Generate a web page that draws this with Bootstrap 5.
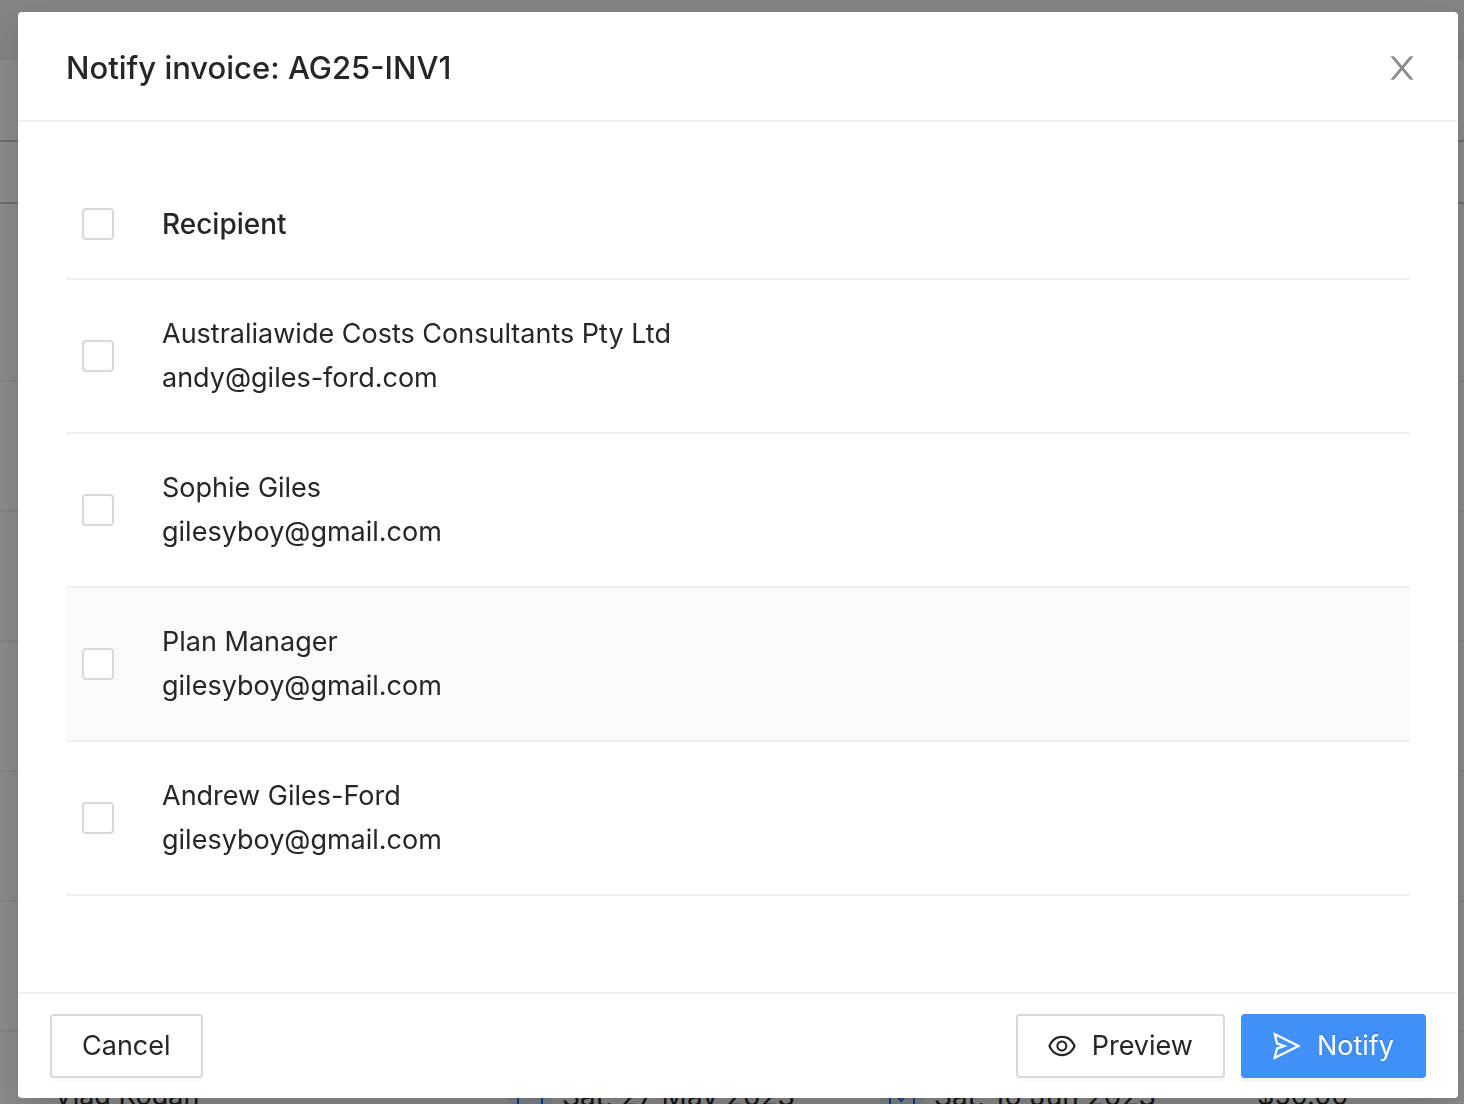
<!DOCTYPE html>
<html lang="en">
<head>
<meta charset="utf-8">
<meta name="viewport" content="width=device-width, initial-scale=1">
<title>Notify invoice: AG25-INV1</title>
<link href="https://cdn.jsdelivr.net/npm/bootstrap@5.3.0/dist/css/bootstrap.min.css" rel="stylesheet">
<style>
  body { font: 27px/44px Inter, "Liberation Sans", sans-serif; color: #262626; background: #fff; }
  .page-under { height: 100vh; overflow: hidden; }
  .page-top { height: 60px; background: #f0f2f5; }
  .page-tabs { height: 82px; border-bottom: 2px solid #c9c9c9; }
  .invoice-list { table-layout: fixed; width: 100%; border-collapse: separate; border-spacing: 0; }
  .invoice-list th { height: 62px; border-bottom: 2px solid #c9c9c9; }
  .invoice-list td { height: 130px; padding: 0; border-bottom: 2px solid #f0f0f0; white-space: nowrap; }
  .invoice-list .tall-row td { height: 178px; }
  .invoice-list td:first-child { padding-left: 54px; }
  .date-cell { gap: 10px; font-size: 28px; }
  .date-icon { width: 44px; height: 44px; background: #e6f0ff; color: #1a6fff; }
  .modal-backdrop { --bs-backdrop-opacity: .45; }
  .notify-dialog { max-width: none; margin: 12px 6px 6px 18px; }
  .modal-content { color: inherit; border: 0; border-radius: 4px; box-shadow: 0 12px 32px rgba(0,0,0,.12), 0 18px 56px 16px rgba(0,0,0,.05); }
  .modal-header { padding: 34px 40px 30px 48px; border-bottom: 2px solid #f0f0f0; border-radius: 0; }
  .modal-title { font-size: 31px; line-height: 44px; font-weight: 500; }
  .close-btn { width: 32px; height: 32px; color: #8c8c8c; }
  .modal-body { padding: 48px; }
  .recipients { --bs-table-color: #262626; --bs-table-bg: transparent; margin-bottom: 48px; table-layout: fixed; }
  .recipients > :not(caption) > * > * { padding: 32px 16px; border-bottom: 2px solid #f0f0f0; vertical-align: middle; }
  .recipients th { font-size: 28px; font-weight: 500; }
  .recipients .pick-col { width: 80px; }
  .recipients .row-hover > td { background: #fafafa; }
  .recipients .form-check-input { display: block; float: none; width: 32px; height: 32px; margin: 0; border: 2px solid #d9d9d9; border-radius: 4px; background-color: #fff; }
  .modal-footer { padding: 20px 32px; gap: 16px; border-top: 2px solid #f0f0f0; }
  .modal-footer > * { margin: 0; }
  .action-btn { --bs-btn-font-size: 27px; --bs-btn-line-height: 44px; --bs-btn-padding-x: 30px; --bs-btn-padding-y: 8px; --bs-btn-border-width: 2px; --bs-btn-border-radius: 4px; --bs-btn-color: #262626; --bs-btn-bg: #fff; --bs-btn-border-color: #d9d9d9; box-shadow: 0 4px 0 rgba(0,0,0,.02); }
  .action-main { --bs-btn-color: #fff; --bs-btn-bg: #4090f7; --bs-btn-border-color: #4090f7; text-shadow: 0 -2px 0 rgba(0,0,0,.12); box-shadow: 0 4px 0 rgba(0,0,0,.045); }
</style>
<script src="https://cdn.jsdelivr.net/npm/bootstrap@5.3.0/dist/js/bootstrap.bundle.min.js"></script>
</head>
<body>
<div class="page-under">
  <div class="page-top"></div>
  <div class="page-tabs"></div>
  <table class="invoice-list">
    <colgroup><col style="width:508px"><col style="width:372px"><col style="width:377px"><col></colgroup>
    <thead><tr><th></th><th></th><th></th><th></th></tr></thead>
    <tbody>
      <tr class="tall-row"><td></td><td></td><td></td><td></td></tr>
      <tr><td></td><td></td><td></td><td></td></tr>
      <tr><td></td><td></td><td></td><td></td></tr>
      <tr><td></td><td></td><td></td><td></td></tr>
      <tr><td></td><td></td><td></td><td></td></tr>
      <tr><td></td><td></td><td></td><td></td></tr>
      <tr>
        <td>Vlad Kogan</td>
        <td><div class="date-cell d-flex align-items-center"><span class="date-icon d-flex align-items-center justify-content-center"><svg width="28" height="28" viewBox="0 0 28 28" fill="none" stroke="currentColor" stroke-width="2"><path d="M2 5h24v21H2zM8 1v6M20 1v6"/></svg></span>Sat, 27 May 2023</div></td>
        <td><div class="date-cell d-flex align-items-center"><span class="date-icon d-flex align-items-center justify-content-center"><svg width="28" height="28" viewBox="0 0 28 28" fill="none" stroke="currentColor" stroke-width="2"><path d="M2 5h24v21H2zM8 1v6M20 1v6M9 14l4 5 7-8"/></svg></span>Sat, 10 Jun 2023</div></td>
        <td>$50.00</td>
      </tr>
    </tbody>
  </table>
</div>
<div class="modal-backdrop show"></div>
<div class="modal d-block" tabindex="-1" role="dialog" aria-modal="true" aria-labelledby="notifyTitle">
  <div class="modal-dialog notify-dialog">
    <div class="modal-content">
      <div class="modal-header">
        <h1 class="modal-title" id="notifyTitle">Notify invoice: AG25-INV1</h1>
        <button type="button" class="close-btn btn p-0 border-0 d-flex" aria-label="Close"><svg width="32" height="32" viewBox="64 64 896 896" fill="currentColor" aria-hidden="true"><path d="M563.8 512l262.5-312.9c4.4-5.2.7-13.1-6.1-13.1h-79.8c-4.7 0-9.2 2.1-12.3 5.7L511.6 449.8 295.1 191.7c-3-3.6-7.5-5.7-12.3-5.7H203c-6.8 0-10.5 7.9-6.1 13.1L459.4 512 196.9 824.9A7.95 7.95 0 00203 838h79.8c4.7 0 9.2-2.1 12.3-5.7l216.5-258.1 216.5 258.1c3 3.6 7.5 5.7 12.3 5.7h79.8c6.8 0 10.5-7.9 6.1-13.1L563.8 512z"/></svg></button>
      </div>
      <div class="modal-body">
        <table class="table recipients">
          <thead>
            <tr><th class="pick-col"><input class="form-check-input" type="checkbox" aria-label="Select all recipients"></th><th scope="col">Recipient</th></tr>
          </thead>
          <tbody>
            <tr><td><input class="form-check-input" type="checkbox" id="r1"></td><td><label class="d-block" for="r1">Australiawide Costs Consultants Pty Ltd<br>andy@giles-ford.com</label></td></tr>
            <tr><td><input class="form-check-input" type="checkbox" id="r2"></td><td><label class="d-block" for="r2">Sophie Giles<br>gilesyboy@gmail.com</label></td></tr>
            <tr class="row-hover"><td><input class="form-check-input" type="checkbox" id="r3"></td><td><label class="d-block" for="r3">Plan Manager<br>gilesyboy@gmail.com</label></td></tr>
            <tr><td><input class="form-check-input" type="checkbox" id="r4"></td><td><label class="d-block" for="r4">Andrew Giles-Ford<br>gilesyboy@gmail.com</label></td></tr>
          </tbody>
        </table>
      </div>
      <div class="modal-footer">
        <button type="button" class="btn action-btn me-auto">Cancel</button>
        <button type="button" class="btn action-btn d-flex align-items-center gap-3"><svg width="28" height="28" viewBox="64 64 896 896" fill="currentColor" aria-hidden="true"><path d="M942.2 486.2C847.4 286.5 704.1 186 512 186c-192.2 0-335.4 100.5-430.2 300.3a60.3 60.3 0 000 51.5C176.6 737.5 319.9 838 512 838c192.2 0 335.4-100.5 430.2-300.3 7.7-16.2 7.7-35 0-51.5zM512 766c-161.3 0-279.4-81.8-362.7-254C232.6 339.8 350.7 258 512 258c161.3 0 279.4 81.8 362.7 254C791.5 684.2 673.4 766 512 766zm-4-430c-97.2 0-176 78.8-176 176s78.8 176 176 176 176-78.8 176-176-78.8-176-176-176zm0 288c-61.9 0-112-50.1-112-112s50.1-112 112-112 112 50.1 112 112-50.1 112-112 112z"/></svg>Preview</button>
        <button type="button" class="btn action-btn action-main d-flex align-items-center gap-3"><svg width="28" height="28" viewBox="64 64 896 896" fill="currentColor" aria-hidden="true"><path d="M931.4 498.9L94.9 79.5c-3.4-1.7-7.3-2.1-11-1.2a15.99 15.99 0 00-11.7 19.3l86.2 352.2c1.3 5.3 5.2 9.6 10.4 11.3l147.7 50.7-147.6 50.7c-5.2 1.8-9.1 6-10.3 11.3L72.2 926.5c-.9 3.7-.5 7.6 1.2 10.9 3.9 7.9 13.5 11.1 21.5 7.2l836.5-417c3.1-1.5 5.6-4.1 7.2-7.1 3.9-8 .7-17.6-7.2-21.6zM170.8 826.3l50.3-205.6 295.2-101.3c2.3-.8 4.2-2.6 5-5 1.4-4.2-.8-8.7-5-10.2L221.1 403 171 198.2l628 314.9-628.2 313.2z"/></svg>Notify</button>
      </div>
    </div>
  </div>
</div>
</body>
</html>
